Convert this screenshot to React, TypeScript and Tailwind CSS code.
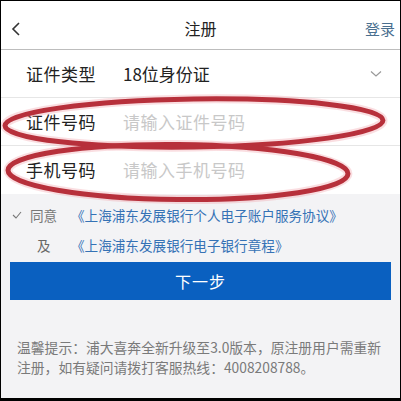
import React from 'react';

const font = { fontFamily: '"Noto Sans CJK SC", "Noto Sans", sans-serif' };

function Row({ label, value, placeholder, chevron, border }: { label: string; value?: string; placeholder?: string; chevron?: boolean; border?: boolean }) {
  return (
    <div className={`flex items-center h-[48px] pl-[25px] pr-[16px] ${border ? 'border-b border-[#e6e6e6]' : ''}`}>
      <div className="w-[97px] text-[17px] text-[#222] tracking-[0.5px]">{label}</div>
      {value && <div className="flex-1 text-[17px] text-[#222]">{value}</div>}
      {placeholder && <div className="flex-1 text-[17px] text-[#c8c8c8] tracking-[0.5px]">{placeholder}</div>}
      {chevron && (
        <svg width="12" height="8" viewBox="0 0 12 8" className="mr-[2px]">
          <path d="M1 1.5 L6 6 L11 1.5" fill="none" stroke="#999" strokeWidth="1.2" />
        </svg>
      )}
    </div>
  );
}

export default function App() {
  return (
    <div className="relative w-[401px] h-[401px] overflow-hidden border border-b-[3px] border-black bg-[#f3f3f5]" style={font}>
      {/* Header */}
      <div className="relative flex items-center justify-center h-[49px] bg-white border-b border-[#bdbdbd]">
        <svg width="10" height="14" viewBox="0 0 10 14" className="absolute left-[10px] top-[21px]">
          <path d="M8 1 L2 7 L8 13" fill="none" stroke="#333" strokeWidth="1.6" />
        </svg>
        <span className="text-[16px] text-[#222] mt-[6px]">注册</span>
        <span className="absolute right-[5px] top-[17px] text-[15px] text-[#4a6f8f]">登录</span>
      </div>

      {/* Form */}
      <div className="bg-white">
        <Row label="证件类型" value="18位身份证" chevron border />
        <Row label="证件号码" placeholder="请输入证件号码" border />
        <Row label="手机号码" placeholder="请输入手机号码" />
      </div>

      {/* Agreement */}
      <div className="pt-[10px] text-[13.6px]">
        <div className="flex items-center h-[22px]">
          <svg width="10" height="8" viewBox="0 0 10 8" className="ml-[11px] mr-[8px]">
            <path d="M1 4 L4 7 L9 1" fill="none" stroke="#777" strokeWidth="1.1" />
          </svg>
          <span className="text-[#777] w-[41px]">同意</span>
          <span className="text-[#3572b5]">《上海浦东发展银行个人电子账户服务协议》</span>
        </div>
        <div className="flex items-center h-[22px] mt-[8px]">
          <span className="text-[#666] ml-[36px] w-[34px]">及</span>
          <span className="text-[#3572b5]">《上海浦东发展银行电子银行章程》</span>
        </div>
      </div>

      {/* Button */}
      <div className="px-[9px] mt-[6px]">
        <div className="flex items-center justify-center h-[38px] bg-[#0a60c0] text-white text-[16px] tracking-[1px]">
          下一步
        </div>
      </div>

      {/* Tip */}
      <div className="px-[16px] mt-[37px] text-[13.8px] leading-[20px] text-[#7a7a7a]">
        温馨提示：浦大喜奔全新升级至3.0版本，原注册用户需重新注册，如有疑问请拨打客服热线：4008208788。
      </div>

      {/* Red annotation ellipses */}
      <svg className="absolute left-0 top-0 pointer-events-none" width="401" height="401" viewBox="0 0 401 401">
        <g fill="none" stroke="#f0a0a8" strokeWidth="9" strokeOpacity="0.35">
          <ellipse cx="193" cy="122" rx="189" ry="24" transform="rotate(-0.8 193 122)" />
          <ellipse cx="177" cy="171" rx="170" ry="27.5" transform="rotate(0.6 177 171)" />
        </g>
        <g fill="none" stroke="#b7303b" strokeWidth="5">
          <ellipse cx="193" cy="122" rx="189" ry="24" transform="rotate(-0.8 193 122)" />
          <ellipse cx="177" cy="171" rx="170" ry="27.5" transform="rotate(0.6 177 171)" />
        </g>
      </svg>
    </div>
  );
}
